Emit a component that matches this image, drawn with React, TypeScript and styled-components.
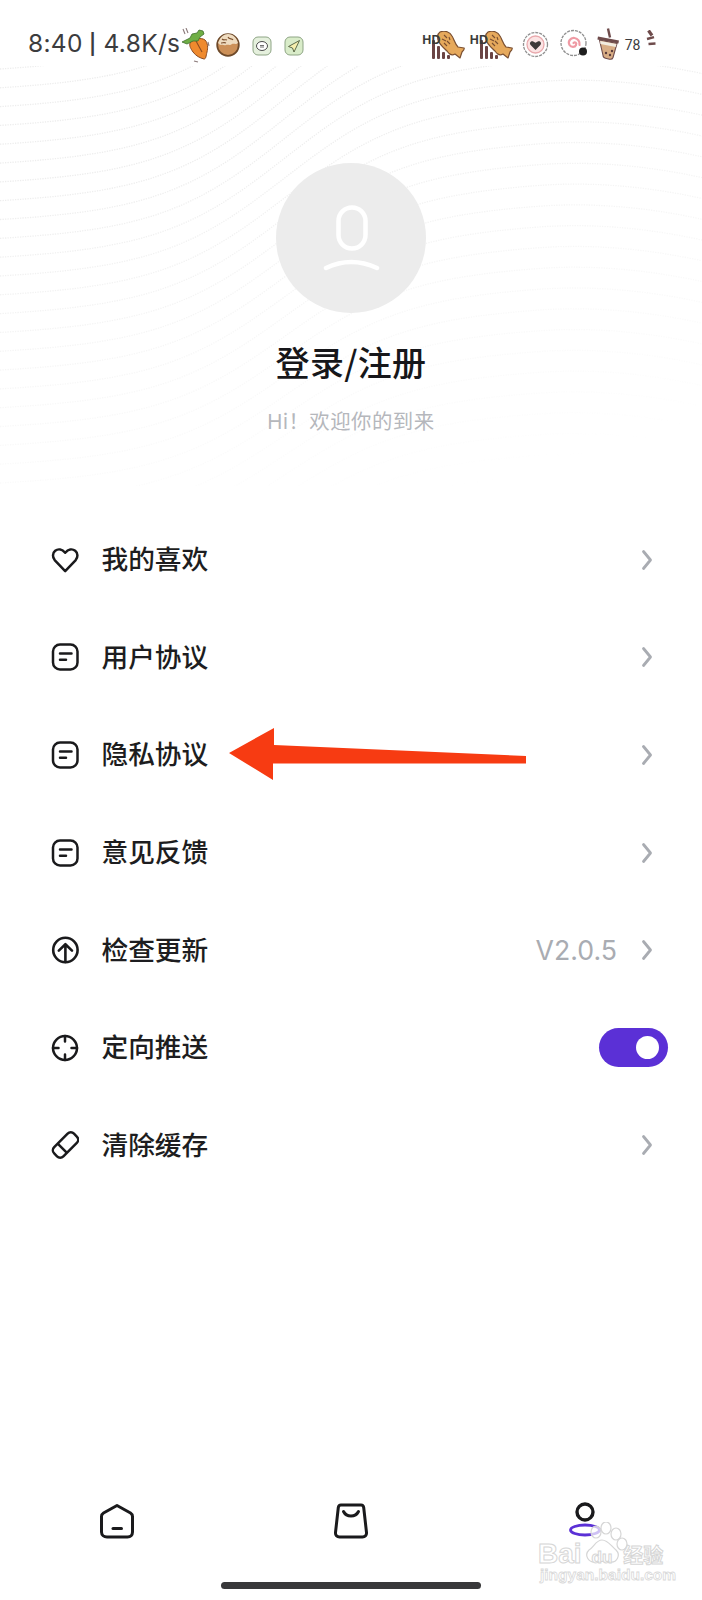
import styled, { createGlobalStyle } from "styled-components";

const GlobalStyle = createGlobalStyle`
  html, body {
    margin: 0;
    padding: 0;
    background: #ffffff;
  }
  body {
    font-family: Inter, "Noto Sans CJK SC", sans-serif;
  }
`;

const Page = styled.div`
  position: relative;
  width: 702px;
  height: 1600px;
  overflow: hidden;
  background: #ffffff;
  display: flex;
  flex-direction: column;
`;

const WaveLayer = styled.svg`
  position: absolute;
  left: 0;
  top: 66px;
  width: 702px;
  height: 420px;
  mask-image: linear-gradient(165deg, #000 0%, #000 22%, rgba(0, 0, 0, 0.4) 58%, transparent 90%);
`;

const StatusBar = styled.div`
  position: relative;
  height: 66px;
  flex: none;
  display: flex;
  justify-content: space-between;
  align-items: flex-start;
  padding: 28px 44px 0 28px;
  box-sizing: border-box;
`;

const StatusGroup = styled.div`
  display: flex;
  align-items: center;
  height: 32px;
`;

const Clock = styled.span`
  font-family: Inter, sans-serif;
  font-size: 24.5px;
  line-height: 32px;
  letter-spacing: 0.3px;
  color: #3c3c3e;
  white-space: nowrap;
`;

const ClockPipe = styled.span`
  font-size: 20px;
  font-weight: 600;
  margin: 0 0 0 -1px;
  position: relative;
  top: -1px;
`;

const Glyph = styled.svg<{ $ml?: number; $mt?: number }>`
  flex: none;
  display: block;
  margin-left: ${(p) => p.$ml ?? 0}px;
  margin-top: ${(p) => p.$mt ?? 0}px;
`;

const NetSignal = styled.div<{ $ml?: number }>`
  position: relative;
  width: 43px;
  height: 28px;
  margin-left: ${(p) => p.$ml ?? 0}px;
  margin-top: 2px;
`;

const HdLabel = styled.span`
  position: absolute;
  left: 0;
  top: 3px;
  font-family: "Liberation Sans", sans-serif;
  font-size: 12.5px;
  line-height: 12px;
  font-weight: 700;
  color: #3a3a3a;
`;

const SignalArt = styled.svg`
  position: absolute;
  left: 0;
  top: 0;
`;

const Battery = styled.span`
  font-family: Roboto, sans-serif;
  font-size: 14px;
  letter-spacing: -0.3px;
  color: #3c3c3e;
  margin-left: 4px;
  margin-top: 1px;
`;

const Profile = styled.div`
  position: relative;
  display: flex;
  flex-direction: column;
  align-items: center;
  padding-top: 97px;
  height: 445px;
  flex: none;
  box-sizing: border-box;
`;

const Avatar = styled.div`
  width: 150px;
  height: 150px;
  border-radius: 50%;
  background: #ececec;
  display: flex;
  align-items: center;
  justify-content: center;
`;

const LoginTitle = styled.h1`
  margin: 26px 0 0;
  font-family: "Noto Sans CJK SC", sans-serif;
  font-size: 34px;
  line-height: 46px;
  letter-spacing: 0.3px;
  font-weight: 500;
  color: #17171a;
`;

const Greeting = styled.p`
  margin: 23px 0 0;
  font-family: Inter, "Noto Sans CJK SC", sans-serif;
  font-size: 20.4px;
  line-height: 28px;
  letter-spacing: 0.5px;
  color: #b5b7bc;
`;

const Menu = styled.div`
  display: flex;
  flex-direction: column;
  flex: none;
`;

const Row = styled.div`
  position: relative;
  height: 97.6px;
  display: flex;
  align-items: center;
  padding: 0 34px 0 51px;
`;

const RowIcon = styled.svg`
  flex: none;
  width: 28px;
  height: 28px;
  color: #1a1a1c;
`;

const RowLabel = styled.span`
  margin: 0 0 3px 22.5px;
  font-family: "Noto Sans CJK SC", sans-serif;
  font-size: 26.7px;
  line-height: 36px;
  font-weight: 500;
  color: #1d1d20;
  flex: 1;
`;

const RowValue = styled.span`
  font-family: Inter, sans-serif;
  font-size: 26.7px;
  color: #a9acb2;
  margin-right: 24px;
`;

const Chevron = styled.svg`
  flex: none;
  width: 12px;
  height: 22px;
  margin-right: 15px;
`;

const Toggle = styled.div`
  width: 69px;
  height: 39px;
  border-radius: 20px;
  background: #5b30d6;
  display: flex;
  align-items: center;
  justify-content: flex-end;
  padding-right: 9px;
  box-sizing: border-box;
`;

const ToggleKnob = styled.div`
  width: 23px;
  height: 23px;
  border-radius: 50%;
  background: #ffffff;
`;

const PointerArrow = styled.svg`
  position: absolute;
  left: 220px;
  top: 715px;
  width: 320px;
  height: 80px;
`;

const TabBar = styled.div`
  margin-top: auto;
  height: 68px;
  display: grid;
  grid-template-columns: repeat(3, 34px);
  justify-content: space-between;
  padding: 0 100px 0 100px;
  box-sizing: border-box;
  flex: none;
`;

const TabIcon = styled.svg`
  width: 34px;
  height: 36px;
  display: block;
  overflow: visible;
`;

const HomeIndicatorTrack = styled.div`
  height: 29px;
  flex: none;
  display: flex;
  justify-content: center;
  padding-top: 11px;
  box-sizing: border-box;
`;

const HomeIndicator = styled.div`
  width: 260px;
  height: 7px;
  border-radius: 4px;
  background: #38383a;
`;

const Watermark = styled.div`
  position: absolute;
  left: 538px;
  top: 1522px;
  width: 130px;
  height: 62px;
`;

const Paw = styled.svg`
  position: absolute;
  left: 42px;
  top: 0;
`;

const WatermarkLine = styled.div`
  position: absolute;
  left: 0;
  top: 18px;
  width: 128px;
  display: flex;
  align-items: baseline;
  color: rgba(255, 255, 255, 0.85);
  -webkit-text-stroke: 1px #d6d6d6;
`;

const BaiWord = styled.span`
  font-family: "Liberation Sans", sans-serif;
  font-size: 28px;
  font-weight: 700;
  line-height: 28px;
`;

const DuWord = styled.span`
  font-family: "Liberation Sans", sans-serif;
  font-size: 17px;
  font-weight: 700;
  margin-left: 10px;
`;

const JingyanWord = styled.span`
  font-family: "Noto Sans CJK SC", sans-serif;
  font-size: 20px;
  line-height: 24px;
  margin-left: 11px;
  font-weight: 700;
`;

const WatermarkUrl = styled.div`
  position: absolute;
  left: 2px;
  top: 44px;
  font-family: "Liberation Sans", sans-serif;
  font-size: 15.5px;
  line-height: 18px;
  font-weight: 700;
  white-space: nowrap;
  color: #ffffff;
  -webkit-text-stroke: 0.8px #d9d9d9;
`;

// contour lines behind the profile block
function buildWaves() {
  const lines: string[] = [];
  for (let k = 0; k < 32; k++) {
    const y0 = 5 + 18.8 * k;
    const amp = 205 - k * 2;
    let d = "";
    for (let x = 0; x <= 702; x += 6) {
      const s = 1 / (1 + Math.exp(-(x - 285) / 62));
      const drop = x > 540 ? 0.00078 * (x - 540) * (x - 540) : 0;
      const y = y0 - amp * s - x * 0.03 + drop;
      d += `${x === 0 ? "M" : "L"}${x} ${y.toFixed(1)} `;
    }
    lines.push(d);
  }
  return lines;
}

const waves = buildWaves();

function NoteIcon() {
  return (
    <RowIcon viewBox="0 0 28 28" fill="none" stroke="currentColor" strokeWidth="2.5" strokeLinecap="round">
      <rect x="2" y="1.5" width="24.5" height="25" rx="7" />
      <path d="M9 10.6h11.5M9 16.8h6" />
    </RowIcon>
  );
}

function HeartIcon() {
  return (
    <RowIcon viewBox="0 0 28 28" fill="none" stroke="currentColor" strokeWidth="2.5" strokeLinejoin="round">
      <path d="M14.2 25.2 3.9 14.4C1.2 11.4 1.4 7 4.2 4.8c2.9-2.3 7-1.6 10 1.9 3-3.5 7.1-4.2 10-1.9 2.8 2.2 3 6.6.3 9.6L14.2 25.2Z" />
    </RowIcon>
  );
}

function UpdateIcon() {
  return (
    <RowIcon viewBox="0 0 28 28" fill="none" stroke="currentColor" strokeWidth="2.6" strokeLinecap="round" strokeLinejoin="round">
      <circle cx="14.4" cy="14" r="12.2" />
      <path d="M14.4 26V8.5M7.8 14.6l6.6-6.4 6.6 6.4" />
    </RowIcon>
  );
}

function TargetIcon() {
  return (
    <RowIcon viewBox="0 0 28 28" fill="none" stroke="currentColor" strokeWidth="2.5" strokeLinecap="round">
      <circle cx="14" cy="14" r="12" />
      <path d="M14 2v5.5M14 20.5V26M2 14h5.5M20.5 14H26" />
    </RowIcon>
  );
}

function EraserIcon() {
  return (
    <RowIcon viewBox="0 0 28 28" fill="none" stroke="currentColor" strokeWidth="2.5" strokeLinejoin="round">
      <g transform="rotate(-45 14.5 14)">
        <rect x="0.5" y="7.5" width="28" height="13" rx="4.5" />
        <path d="M10 7.5v13" />
      </g>
    </RowIcon>
  );
}

function RowChevron() {
  return (
    <Chevron viewBox="0 0 12 22" fill="none" stroke="#a9acb2" strokeWidth="2.8" strokeLinecap="round" strokeLinejoin="round">
      <path d="M2.5 2.5 9.5 11l-7 8.5" />
    </Chevron>
  );
}

function FishSignal({ ml }: { ml?: number }) {
  return (
    <NetSignal $ml={ml}>
      <SignalArt width="43" height="28" viewBox="0 0 43 28">
        <g fill="#6b4444">
          <rect x="10" y="9" width="3" height="19" rx="1" />
          <rect x="15" y="15" width="3" height="13" rx="1" />
          <rect x="20" y="21" width="3" height="7" rx="1" />
          <rect x="25" y="24" width="3" height="4" rx="1" />
        </g>
        <path
          d="M18 1c5-2 10 0 12 4 2 3 3 8 6 11l6 1c1 1-1 3-2 4l-2 6-5-4c-3 2-6 0-8-3-2-2-6-5-8-9-2-3-2-8 1-10Z"
          fill="#e6a95c"
          stroke="#7a4f31"
          strokeWidth="1.2"
          strokeLinejoin="round"
        />
        <path d="M22 4l3 3M20 8l4 2M25 10l3 3M22 12l3 3M27 6l1 3" stroke="#7a4f31" strokeWidth="1.1" fill="none" />
      </SignalArt>
      <HdLabel>HD</HdLabel>
    </NetSignal>
  );
}

export default function App() {
  return (
    <Page>
      <GlobalStyle />
      <WaveLayer viewBox="0 0 702 420" fill="none">
        {waves.map((d, i) => (
          <path key={i} d={d} stroke="#ededed" strokeWidth="1.3" strokeDasharray="1.3 1.2" />
        ))}
      </WaveLayer>

      <StatusBar>
        <StatusGroup>
          <Clock>
            8:40 <ClockPipe>|</ClockPipe> 4.8K/s
          </Clock>
          {/* carrot */}
          <Glyph width="30" height="36" viewBox="0 0 30 36" $ml={1} $mt={4}>
            <path d="M9 15c3-4 11-6 15-3 3 3 3 8 2 12-1 4-1 7-3 7-4-1-8-3-11-7-2-3-4-6-3-9Z" fill="#ef8a2e" stroke="#8a4b22" strokeWidth="1" />
            <path d="M15 13l6 11" stroke="#8a4b22" strokeWidth="1.1" />
            <path d="M1 14l8-4 2-4 5-1 2-3 4 1 1 3-4 3-2 4-5 0-6 3-5-2Z" fill="#6fae45" stroke="#3f6e2c" strokeWidth="0.8" />
            <path d="M2 1l2 5M5 0l2 5M27 14l1 4M13 33l4 1" stroke="#8b7a7a" strokeWidth="1.1" />
          </Glyph>
          {/* takoyaki */}
          <Glyph width="24" height="24" viewBox="0 0 24 24" $ml={5} $mt={2}>
            <circle cx="12" cy="12" r="10.8" fill="#cc9058" stroke="#6e4a2a" strokeWidth="1.800" />
            <path d="M2 10c2-6 6-9 10-9 5 0 9 4 10 9-2 2-4 0-6 1-2 2-4 0-6 1-2 1-3-1-5 0-1 0-2-1-3-2Z" fill="#efdcc0" />
            <path d="M6 6c2 2 3 0 5 1M12 4c1 3 4 1 5 3M5 10c2 0 3-1 5 0" stroke="#7b4f2c" strokeWidth="1.100" fill="none" />
          </Glyph>
          <Glyph width="20" height="20" viewBox="0 0 20 20" $ml={12} $mt={3}>
            <rect x="1" y="1" width="18" height="18" rx="5" fill="#e5f0dd" stroke="#8ea585" strokeWidth="1" />
            <ellipse cx="10" cy="10" rx="5.500" ry="4.500" fill="#fff" stroke="#4d4d4d" strokeWidth="1" />
            <path d="M8 9.500h4M8 11h4" stroke="#4d4d4d" strokeWidth="0.8" />
          </Glyph>
          <Glyph width="20" height="20" viewBox="0 0 20 20" $ml={12} $mt={3}>
            <rect x="1" y="1" width="18" height="18" rx="5" fill="#d9ecc9" stroke="#8ea585" strokeWidth="1" />
            <path d="M15.500 4.500 4.500 10.500l4 1.500 1.500 4 5.500-11.500Z" fill="#f6efae" stroke="#4d5b3d" strokeWidth="0.9" strokeLinejoin="round" />
          </Glyph>
        </StatusGroup>

        <StatusGroup>
          <FishSignal />
          <FishSignal ml={4.5} />
          {/* heart badge */}
          <Glyph width="27" height="27" viewBox="0 0 27 27" $ml={9.5}>
            <circle cx="13.500" cy="13.500" r="12" fill="#fff" stroke="#8f8f8f" strokeWidth="1.300" strokeDasharray="3 1" />
            <circle cx="13.500" cy="13.500" r="8.500" fill="#fbe4e4" stroke="#e9a9ad" strokeWidth="1.300" />
            <path d="M13.500 19 8.600 14c-1.800-2 .7-4.800 3-3.300l1.900 1.100 1.900-1.100c2.300-1.500 4.800 1.300 3 3.300L13.500 19Z" fill="#3f3a3a" />
          </Glyph>
          {/* narutomaki */}
          <Glyph width="28" height="30" viewBox="0 0 28 30" $ml={10.5}>
            <circle cx="13.500" cy="14" r="12.500" fill="#fff" stroke="#8f8f8f" strokeWidth="1.300" strokeDasharray="3 1" />
            <path d="M13.500 14c1.500-1.500 3.500 0 2.500 2-1 2.500-5 2.500-6.500 0-2-3.500 1-7.500 5-7 3.500.5 5.500 3.500 5 7" fill="none" stroke="#ef9aa4" strokeWidth="2.200" strokeLinecap="round" />
            <circle cx="23" cy="22.500" r="4" fill="#1e1e1e" />
          </Glyph>
          {/* boba */}
          <Glyph width="24" height="32" viewBox="0 0 24 32" $ml={9} $mt={-1}>
            <path d="M11 0.500l2 9" stroke="#6e4b4b" strokeWidth="2.400" />
            <path d="M1 8.500 22 12.500l-.6 3-21-4 .6-3Z" fill="#6e4b4b" />
            <path d="M2.500 12l17.500 3.500-4 14c-.5 1.500-2 2-3.500 1.700l-4-1c-1.500-.4-2.500-1.500-2.500-3L2.500 12Z" fill="#d8ad85" stroke="#6e4b4b" strokeWidth="1.100" />
            <path d="M3 13l16.500 3-.8 3L3.500 16 3 13Z" fill="#f2ece0" />
            <circle cx="9" cy="25" r="1.200" fill="#5a3c3c" />
            <circle cx="13" cy="27" r="1.200" fill="#5a3c3c" />
            <circle cx="15" cy="23" r="1.200" fill="#5a3c3c" />
          </Glyph>
          <Battery>78</Battery>
          <Glyph width="12" height="16" viewBox="0 0 12 16" $ml={6} $mt={-12}>
            <path d="M2.500 0.500 6 5.500" stroke="#6e4b4b" strokeWidth="3.200" />
            <path d="M1 9l7-1.800" stroke="#6e4b4b" strokeWidth="2.400" />
            <path d="M2.500 14l7-.5" stroke="#6e4b4b" strokeWidth="2.400" />
          </Glyph>
        </StatusGroup>
      </StatusBar>

      <Profile>
        <Avatar>
          <svg width="150" height="150" viewBox="0 0 150 150" fill="none" stroke="#ffffff" strokeWidth="4.500" strokeLinecap="round">
            <rect x="62.500" y="44.500" width="27" height="41" rx="13.500" />
            <path d="M50 105Q75 93 101 105" />
          </svg>
        </Avatar>
        <LoginTitle>登录/注册</LoginTitle>
        <Greeting>Hi！欢迎你的到来</Greeting>
      </Profile>

      <Menu>
        <Row>
          <HeartIcon />
          <RowLabel>我的喜欢</RowLabel>
          <RowChevron />
        </Row>
        <Row>
          <NoteIcon />
          <RowLabel>用户协议</RowLabel>
          <RowChevron />
        </Row>
        <Row>
          <NoteIcon />
          <RowLabel>隐私协议</RowLabel>
          <RowChevron />
        </Row>
        <Row>
          <NoteIcon />
          <RowLabel>意见反馈</RowLabel>
          <RowChevron />
        </Row>
        <Row>
          <UpdateIcon />
          <RowLabel>检查更新</RowLabel>
          <RowValue>V2.0.5</RowValue>
          <RowChevron />
        </Row>
        <Row>
          <TargetIcon />
          <RowLabel>定向推送</RowLabel>
          <Toggle>
            <ToggleKnob />
          </Toggle>
        </Row>
        <Row>
          <EraserIcon />
          <RowLabel>清除缓存</RowLabel>
          <RowChevron />
        </Row>
      </Menu>

      <PointerArrow viewBox="0 0 320 80">
        <path d="M9 38 54 13l0 17 252 11v7.500H53L53 65Z" fill="#f73b12" />
      </PointerArrow>

      <TabBar>
        <TabIcon viewBox="0 0 34 36" fill="none" stroke="#1a1a1c" strokeWidth="3" strokeLinecap="round" strokeLinejoin="round">
          <path d="M17 2.500 30.500 10c1.300.8 2 2 2 3.500V29c0 3-2 5-5 5H7c-3 0-5.500-2-5.500-5V13.500c0-1.500.7-2.700 2-3.500L17 2.500Z" />
          <path d="M13 25.500h8.500" />
        </TabIcon>
        <TabIcon viewBox="0 0 34 36" fill="none" stroke="#1a1a1c" strokeWidth="3" strokeLinecap="round" strokeLinejoin="round">
          <path d="M7 2h20c1.500 0 2.500 1 2.700 2.500l2.800 25c.3 2.500-1.500 4.500-4 4.500H5.500c-2.500 0-4.300-2-4-4.500l2.800-25C4.500 3 5.500 2 7 2Z" />
          <path d="M9.500 8.500c3 6 12 6 15 0" />
        </TabIcon>
        <TabIcon viewBox="0 0 34 36">
          <circle cx="17" cy="9" r="8" fill="none" stroke="#1a1a1c" strokeWidth="3.400" />
          <ellipse cx="17" cy="27" rx="14.500" ry="5" fill="none" stroke="#5b30d6" strokeWidth="2.800" />
        </TabIcon>
      </TabBar>
      <HomeIndicatorTrack>
        <HomeIndicator />
      </HomeIndicatorTrack>

      <Watermark>
        <Paw width="60" height="46" viewBox="0 0 60 46" fill="rgba(255,255,255,0.7)" stroke="#d6d6d6" strokeWidth="1.200">
          <ellipse cx="16" cy="10" rx="5" ry="6" />
          <ellipse cx="26" cy="6" rx="5" ry="6" />
          <ellipse cx="36" cy="12" rx="5" ry="6" />
          <ellipse cx="42" cy="22" rx="5" ry="6" />
          <path d="M22 18c6 0 9 6 14 10 5 5 1 13-6 12-6-1-9-1-14 0-8 1-12-7-7-12 5-3 7-10 13-10Z" />
        </Paw>
        <WatermarkLine>
          <BaiWord>Bai</BaiWord>
          <DuWord>du</DuWord>
          <JingyanWord>经验</JingyanWord>
        </WatermarkLine>
        <WatermarkUrl>jingyan.baidu.com</WatermarkUrl>
      </Watermark>
    </Page>
  );
}
